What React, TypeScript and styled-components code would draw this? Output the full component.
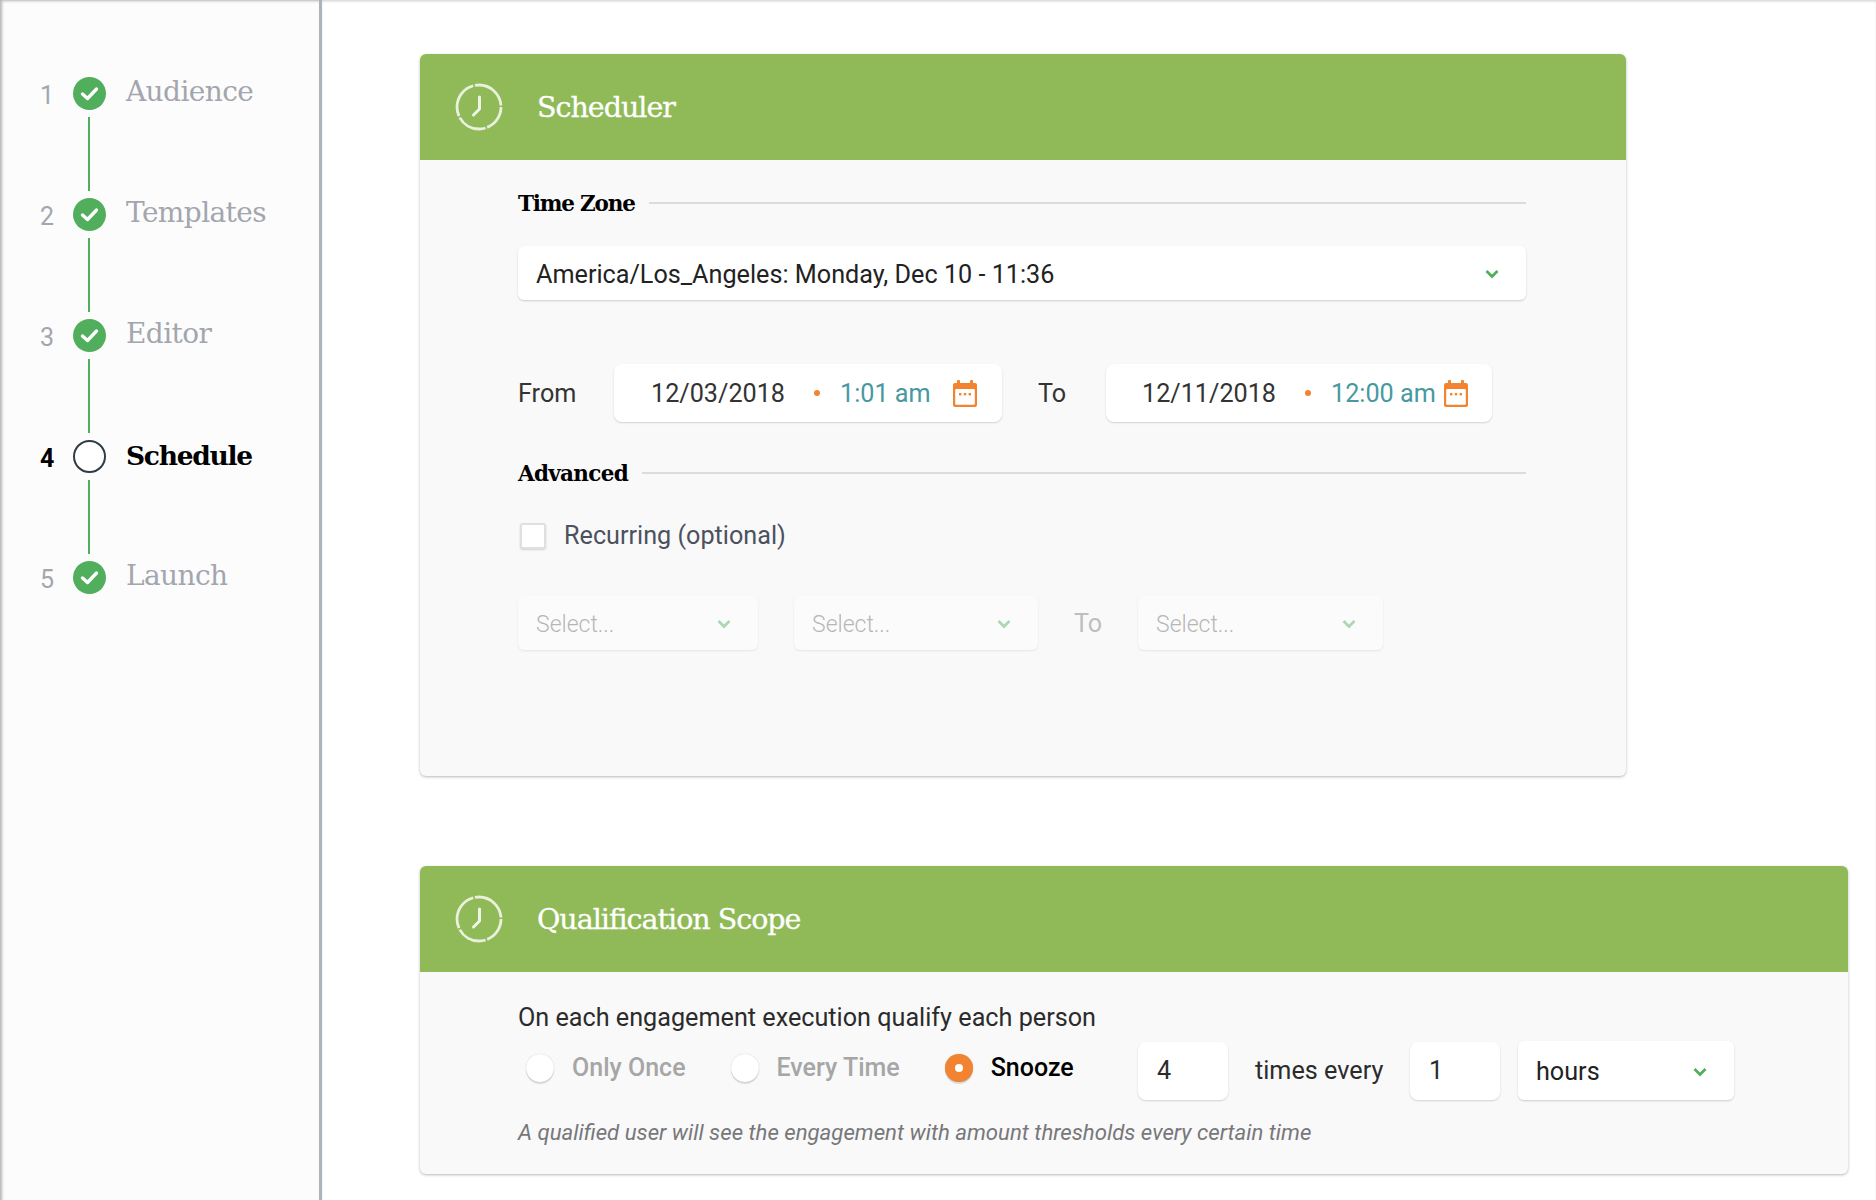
import React from "react";
import styled, { createGlobalStyle } from "styled-components";

const GlobalStyle = createGlobalStyle`
  html, body {
    margin: 0;
    padding: 0;
    background: #fff;
  }
  * {
    box-sizing: border-box;
  }
`;

const SLAB = `"DejaVu Serif", "Liberation Serif", serif`;
const SANS = `Roboto, "Liberation Sans", sans-serif`;

const Check = () => (
  <svg width="33" height="33" viewBox="0 0 33 33">
    <circle cx="16.5" cy="16.5" r="16.5" fill="#50ae5c" />
    <path d="M9.5 17l5 4.500 9-9.500" fill="none" stroke="#fff" strokeWidth="3.4" strokeLinecap="round" strokeLinejoin="round" />
  </svg>
);

const Clock = () => (
  <svg width="48" height="48" viewBox="0 0 48 48">
    <circle cx="24" cy="24" r="22" fill="none" stroke="#fff" strokeOpacity="0.8" strokeWidth="2.8" strokeDasharray="26 1.6 30 1.6 38 1.6 37 1.6" />
    <path d="M24.500 14v12l-6 6" fill="none" stroke="#fff" strokeOpacity="0.85" strokeWidth="3" strokeLinecap="round" strokeLinejoin="round" />
  </svg>
);

const Chevron = () => (
  <svg width="14" height="10" viewBox="0 0 14 10">
    <path d="M1.500 2l5.500 5.500L12.500 2" fill="none" stroke="#50ae5c" strokeWidth="2.7" />
  </svg>
);

const Calendar = () => (
  <svg width="24" height="27" viewBox="0 0 24 27">
    <path d="M2 3h20a2 2 0 0 1 2 2v20a2 2 0 0 1-2 2H2a2 2 0 0 1-2-2V5a2 2 0 0 1 2-2z" fill="#f18331" />
    <rect x="4" y="0" width="3" height="5" rx="1" fill="#f18331" />
    <rect x="17" y="0" width="3" height="5" rx="1" fill="#f18331" />
    <rect x="2.200" y="9" width="19.600" height="15.800" rx="1" fill="#fff" />
    <rect x="6" y="13" width="2.400" height="2.400" fill="#f18331" />
    <rect x="10.800" y="13" width="2.400" height="2.400" fill="#f18331" />
    <rect x="15.600" y="13" width="2.400" height="2.400" fill="#f18331" />
  </svg>
);

const steps = [
  { n: 1, label: "Audience", done: true },
  { n: 2, label: "Templates", done: true },
  { n: 3, label: "Editor", done: true },
  { n: 4, label: "Schedule", done: false },
  { n: 5, label: "Launch", done: true },
];

export default function App() {
  return (
    <Page>
      <GlobalStyle />
      <Sidebar>
        {steps.map((s, i) => (
          <React.Fragment key={s.n}>
            <Step>
              <StepNumber $active={!s.done}>{s.n}</StepNumber>
              {s.done ? <Check /> : <OpenCircle />}
              <StepLabel $active={!s.done}>{s.label}</StepLabel>
            </Step>
            {i < steps.length - 1 && <Connector />}
          </React.Fragment>
        ))}
      </Sidebar>
      <Main>
        <Card $width={1206} $height={722}>
          <CardHeader>
            <Clock />
            <CardTitle>Scheduler</CardTitle>
          </CardHeader>
          <SchedulerBody>
            <Heading>
              <HeadingText $tight>Time Zone</HeadingText>
              <HeadingLine />
            </Heading>
            <TimeZoneSelect>
              <SelectText>America/Los_Angeles: Monday, Dec 10 - 11:36</SelectText>
              <Chevron />
            </TimeZoneSelect>
            <DateRow>
              <RangeLabel $width={96}>From</RangeLabel>
              <DateBox $width={388} $left={37} $right={25}>
                <DateText>12/03/2018</DateText>
                <Dot />
                <TimeText>1:01 am</TimeText>
                <CalendarSlot><Calendar /></CalendarSlot>
              </DateBox>
              <RangeLabel $width={68} $gap={36}>To</RangeLabel>
              <DateBox $width={386} $left={36} $right={24}>
                <DateText>12/11/2018</DateText>
                <Dot />
                <TimeText>12:00 am</TimeText>
                <CalendarSlot><Calendar /></CalendarSlot>
              </DateBox>
            </DateRow>
            <AdvancedHeading>
              <HeadingText>Advanced</HeadingText>
              <HeadingLine />
            </AdvancedHeading>
            <CheckRow>
              <CheckBox />
              <CheckLabel>Recurring (optional)</CheckLabel>
            </CheckRow>
            <DisabledRow>
              <SmallSelect $width={240}>
                <MutedText>Select...</MutedText>
                <Chevron />
              </SmallSelect>
              <SmallSelect $width={244} $gap={36}>
                <MutedText>Select...</MutedText>
                <Chevron />
              </SmallSelect>
              <DisabledTo>To</DisabledTo>
              <SmallSelect $width={245}>
                <MutedText>Select...</MutedText>
                <Chevron />
              </SmallSelect>
            </DisabledRow>
          </SchedulerBody>
        </Card>
        <Card $width={1428}>
          <CardHeader>
            <Clock />
            <CardTitle>Qualification Scope</CardTitle>
          </CardHeader>
          <ScopeBody>
            <ScopeText>On each engagement execution qualify each person</ScopeText>
            <ControlRow>
              <RadioGroup>
                <RadioOption>
                  <Radio />
                  <RadioLabel>Only Once</RadioLabel>
                </RadioOption>
                <RadioOption>
                  <Radio />
                  <RadioLabel>Every Time</RadioLabel>
                </RadioOption>
                <RadioOption>
                  <Radio $checked />
                  <RadioLabel $checked>Snooze</RadioLabel>
                </RadioOption>
              </RadioGroup>
              <NumberBox>4</NumberBox>
              <TimesEvery>times every</TimesEvery>
              <NumberBox>1</NumberBox>
              <HoursSelect>
                <SelectText>hours</SelectText>
                <Chevron />
              </HoursSelect>
            </ControlRow>
            <Note>A qualified user will see the engagement with amount thresholds every certain time</Note>
          </ScopeBody>
        </Card>
      </Main>
    </Page>
  );
}

const Page = styled.div`
  display: flex;
  width: 1876px;
  height: 1200px;
  overflow: hidden;
  font-family: ${SANS};
`;

const Sidebar = styled.aside`
  width: 322px;
  flex-shrink: 0;
  padding: 77px 0 0 40px;
  background: #fcfcfd;
  border-right: 3px solid #adb4b9;
  box-shadow: inset 3px 2px 3px -1px rgba(0, 0, 0, 0.28);
`;

const Step = styled.div`
  display: flex;
  align-items: center;
  height: 33px;
`;

const StepNumber = styled.span<{ $active?: boolean }>`
  width: 33px;
  font-size: 25px;
  line-height: 33px;
  padding-top: 3px;
  font-weight: ${(p) => (p.$active ? 700 : 400)};
  color: ${(p) => (p.$active ? "#000" : "#a3a6ad")};
`;

const OpenCircle = styled.span`
  width: 33px;
  height: 33px;
  border-radius: 50%;
  background: #fff;
  border: 2px solid #2f3c46;
`;

const StepLabel = styled.span<{ $active?: boolean }>`
  margin-left: 20px;
  padding-bottom: ${(p) => (p.$active ? 2 : 5)}px;
  font-family: ${SLAB};
  font-size: ${(p) => (p.$active ? 26.5 : 28)}px;
  letter-spacing: ${(p) => (p.$active ? "-1.3px" : "-0.6px")};
  font-weight: ${(p) => (p.$active ? 700 : 400)};
  color: ${(p) => (p.$active ? "#000" : "#a3a6ad")};
`;

const Connector = styled.div`
  width: 2px;
  height: 74px;
  margin: 7px 0 7px 48px;
  background: #50ae5c;
`;

const Main = styled.main`
  flex: 1;
  display: flex;
  flex-direction: column;
  gap: 90px;
  padding: 54px 0 0 98px;
  box-shadow: inset 0 2px 3px -1px rgba(0, 0, 0, 0.2);
`;

const Card = styled.section<{ $width: number; $height?: number }>`
  width: ${(p) => p.$width}px;
  ${(p) => (p.$height ? `height: ${p.$height}px;` : "")}
  display: flex;
  flex-direction: column;
  border-radius: 6px;
  overflow: hidden;
  background: #f9f9f9;
  box-shadow: 0 1px 3px rgba(0, 0, 0, 0.28);
`;

const CardHeader = styled.header`
  height: 106px;
  flex-shrink: 0;
  display: flex;
  align-items: center;
  padding-left: 35px;
  background: #90ba58;
`;

const CardTitle = styled.h2`
  margin: 0 0 0 34px;
  padding-top: 1px;
  font-family: ${SLAB};
  font-size: 28.500px;
  letter-spacing: -1px;
  font-weight: 400;
  -webkit-text-stroke: 0.3px #fff;
  color: #fff;
`;

const SchedulerBody = styled.div`
  padding: 28px 100px 0 98px;
`;

const Heading = styled.div`
  display: flex;
  align-items: center;
  height: 30px;
`;

const AdvancedHeading = styled(Heading)`
  margin-top: 36px;
`;

const HeadingText = styled.span<{ $tight?: boolean }>`
  font-family: ${SLAB};
  font-size: 21.500px;
  letter-spacing: ${(p) => (p.$tight ? "-1.2px" : "-0.7px")};
  font-weight: 700;
  color: #000;
`;

const HeadingLine = styled.span`
  flex: 1;
  height: 2px;
  margin-left: 14px;
  background: #dcdcdc;
`;

const SelectText = styled.span`
  font-size: 25.200px;
  color: #222;
`;

const MutedText = styled(SelectText)`
  font-size: 23px;
  font-weight: 300;
  color: #666;
`;

const SelectBox = styled.div`
  display: flex;
  align-items: center;
  justify-content: space-between;
  height: 54px;
  padding: 2px 27px 0 18px;
  background: #fff;
  border-radius: 6px;
  box-shadow: 0 1px 2px rgba(0, 0, 0, 0.18);
`;

const TimeZoneSelect = styled(SelectBox)`
  margin-top: 28px;
`;

const DateRow = styled.div`
  display: flex;
  align-items: center;
  margin-top: 64px;
`;

const RangeLabel = styled.span<{ $width: number; $gap?: number }>`
  width: ${(p) => p.$width}px;
  margin-left: ${(p) => p.$gap || 0}px;
  font-size: 25.200px;
  color: #333;
`;

const DateBox = styled.div<{ $width: number; $left: number; $right: number }>`
  width: ${(p) => p.$width}px;
  height: 58px;
  display: flex;
  align-items: center;
  padding: 0 ${(p) => p.$right}px 0 ${(p) => p.$left}px;
  background: #fff;
  border-radius: 8px;
  box-shadow: 0 1px 2px rgba(0, 0, 0, 0.16);
`;

const DateText = styled.span`
  font-size: 25.200px;
  color: #333;
`;

const Dot = styled.span`
  width: 6px;
  height: 6px;
  margin: 0 20px 0 29px;
  border-radius: 50%;
  background: #f18331;
`;

const TimeText = styled.span`
  font-size: 25.200px;
  color: #47999f;
`;

const CalendarSlot = styled.span`
  margin-left: auto;
  display: flex;
`;

const CheckRow = styled.div`
  display: flex;
  align-items: center;
  height: 30px;
  margin-top: 32px;
  padding-left: 2px;
`;

const CheckBox = styled.span`
  width: 26px;
  height: 26px;
  margin-top: 2px;
  background: #fff;
  border: 2px solid #dde1e4;
  border-radius: 3px;
  box-shadow: 0 1px 2px rgba(0, 0, 0, 0.16);
`;

const CheckLabel = styled.span`
  margin-left: 18px;
  font-size: 25.200px;
  color: #4c5160;
`;

const DisabledRow = styled.div`
  display: flex;
  align-items: center;
  margin-top: 46px;
  opacity: 0.45;
`;

const SmallSelect = styled(SelectBox)<{ $width: number; $gap?: number }>`
  width: ${(p) => p.$width}px;
  margin-left: ${(p) => p.$gap || 0}px;
`;

const DisabledTo = styled.span`
  width: 100px;
  padding-left: 36px;
  font-size: 25.200px;
  color: #777;
`;

const ScopeBody = styled.div`
  padding: 31px 0 27px 98px;
`;

const ScopeText = styled.div`
  height: 30px;
  line-height: 30px;
  font-size: 25.200px;
  color: #2b2b2b;
`;

const ControlRow = styled.div`
  display: flex;
  align-items: center;
  margin-top: 8px;
`;

const RadioGroup = styled.div`
  width: 620px;
  display: flex;
  gap: 45px;
  margin-bottom: 6px;
  padding-left: 8px;
`;

const RadioOption = styled.label`
  display: flex;
  align-items: center;
  gap: 18px;
`;

const Radio = styled.span<{ $checked?: boolean }>`
  width: 28px;
  height: 28px;
  border-radius: 50%;
  background: ${(p) => (p.$checked ? "#f18331" : "#fff")};
  box-shadow: 0 2px 1px rgba(0, 0, 0, 0.12), 0 0 1px rgba(0, 0, 0, 0.25);
  display: flex;
  align-items: center;
  justify-content: center;
  &::after {
    content: "";
    width: 8px;
    height: 8px;
    border-radius: 50%;
    background: #fff;
  }
`;

const RadioLabel = styled.span<{ $checked?: boolean }>`
  font-size: 25px;
  font-weight: 500;
  color: ${(p) => (p.$checked ? "#000" : "#a6a6a6")};
`;

const NumberBox = styled.div`
  width: 90px;
  height: 58px;
  line-height: 58px;
  padding-left: 19px;
  font-size: 25.200px;
  color: #2b2b2b;
  background: #fff;
  border-radius: 8px;
  box-shadow: 0 1px 2px rgba(0, 0, 0, 0.16);
`;

const TimesEvery = styled.span`
  width: 182px;
  padding-left: 27px;
  font-size: 25.200px;
  color: #2b2b2b;
`;

const HoursSelect = styled(SelectBox)`
  width: 216px;
  height: 59px;
  margin-left: 18px;
`;

const Note = styled.div`
  margin-top: 17px;
  height: 30px;
  line-height: 30px;
  font-size: 22.200px;
  font-style: italic;
  color: #77777a;
`;
